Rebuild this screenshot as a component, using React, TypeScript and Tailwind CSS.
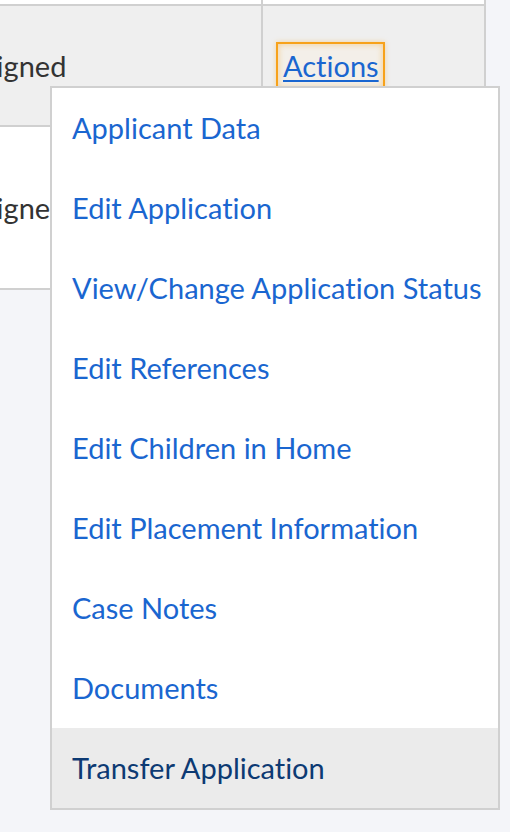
const menuItems = [
  "Applicant Data",
  "Edit Application",
  "View/Change Application Status",
  "Edit References",
  "Edit Children in Home",
  "Edit Placement Information",
  "Case Notes",
  "Documents",
  "Transfer Application",
];

export default function App() {
  return (
    <div
      className="relative h-[832px] w-[510px] overflow-hidden bg-[#f4f5f9] text-[29px] [font-variant-ligatures:none]"
      style={{ fontFamily: "Lato, 'Open Sans', sans-serif" }}
    >
      {/* table rows, scrolled so the first column is cut off */}
      <div className="-ml-[100px] -mt-[40px] w-[586px] border-x-2 border-b-2 border-[#d0d0d0] bg-white">
        <div className="flex h-[44px]">
          <div className="w-[361px] border-r-2 border-[#d0d0d0]" />
          <div className="flex-1" />
        </div>
        <div className="flex h-[121px] border-t-2 border-[#d0d0d0] bg-[#efefef]">
          <div className="flex w-[361px] items-center border-r-2 border-[#d0d0d0] pl-[18px] text-[#333333]">
            Unassigned
          </div>
          <div className="flex flex-1 items-center pl-[13px]">
            <a
              href="#"
              className="inline-block border-2 border-[#f7a21b] bg-[#f3efe9] pl-[5px] pr-[4px] py-[4px] leading-[36px] text-[#1a66d0] underline decoration-2 underline-offset-[3px] shadow-[inset_0_0_6px_rgba(247,162,27,0.45),0_0_5px_rgba(247,162,27,0.35)]"
            >
              Actions
            </a>
          </div>
        </div>
        <div className="flex h-[163px] border-t-2 border-[#d0d0d0]">
          <div className="flex w-[361px] items-center border-r-2 border-[#d0d0d0] pl-[18px] text-[#333333]">
            Unassigned
          </div>
          <div className="flex flex-1 items-center pl-[13px]" />
        </div>
      </div>

      {/* open actions menu */}
      <ul className="absolute left-[50px] top-[86px] w-[450px] border-2 border-[#d0d0d0] bg-white">
        {menuItems.map((label, i) => {
          const active = i === menuItems.length - 1;
          return (
            <li
              key={label}
              className={
                active
                  ? "flex h-[80px] items-center bg-[#ebebeb] pl-[20px] text-[#0d3a73]"
                  : "flex h-[80px] items-center pl-[20px] text-[#1a66d0]"
              }
            >
              {label}
            </li>
          );
        })}
      </ul>
    </div>
  );
}
